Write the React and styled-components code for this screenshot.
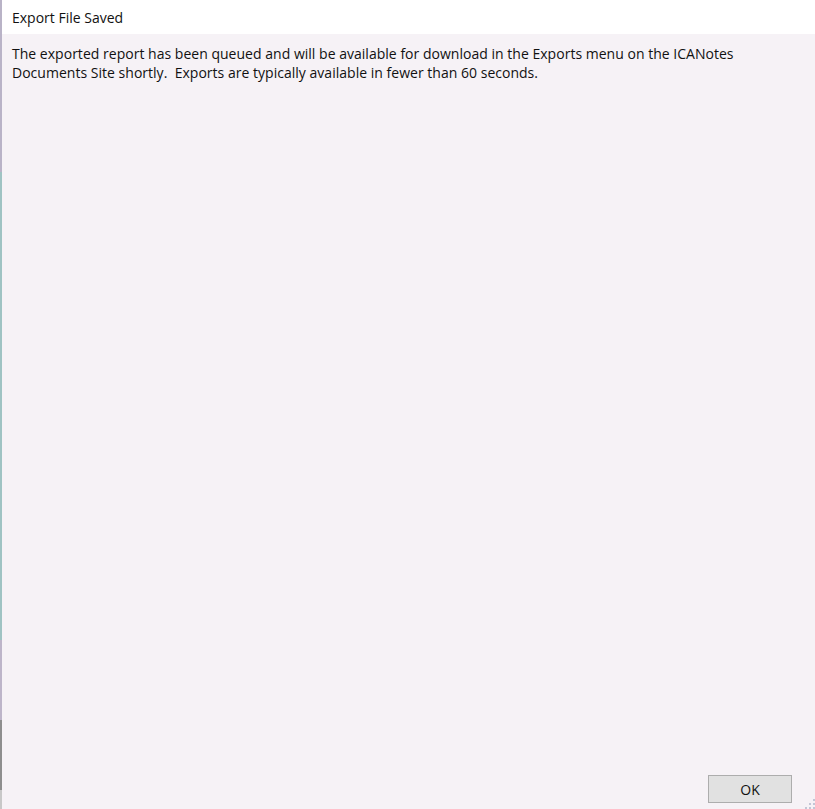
import React from 'react';
import styled, { createGlobalStyle } from 'styled-components';

const Global = createGlobalStyle`
  html, body, #root {
    margin: 0;
    height: 100%;
  }
  body {
    font-family: "Open Sans", "Noto Sans", sans-serif;
    background: #f6f2f6;
  }
`;

const Window = styled.div`
  display: flex;
  height: 809px;
  width: 815px;
  overflow: hidden;
`;

const EdgeStrip = styled.div`
  width: 2px;
  flex-shrink: 0;
  background: linear-gradient(
    to bottom,
    #b9b3c7 0px,
    #b9b3c7 172px,
    #9fc3c3 172px,
    #9fc3c3 640px,
    #bdb5c9 640px,
    #bdb5c9 720px,
    #8e8e8e 720px,
    #8e8e8e 790px,
    #c8c8c8 790px
  );
`;

const Dialog = styled.div`
  position: relative;
  flex: 1;
  display: flex;
  flex-direction: column;
  background: #f6f2f6;
`;

const TitleBar = styled.div`
  height: 34px;
  background: #ffffff;
  display: flex;
  align-items: center;
  padding-left: 10px;
  font-size: 14px;
  color: #111;
`;

const Message = styled.p`
  margin: 0;
  padding: 10px 10px 0;
  font-size: 14px;
  line-height: 19px;
  letter-spacing: 0.02px;
  color: #111;
  white-space: pre-wrap;
`;

const Footer = styled.div`
  margin-top: auto;
  display: flex;
  justify-content: flex-end;
  padding: 0 23px 6px 0;
`;

const Button = styled.button`
  width: 84px;
  height: 28px;
  background: #e1e1e1;
  border: 1px solid #adadad;
  font-family: inherit;
  font-size: 14px;
  color: #111;
  padding: 0;
`;

const SizeGrip = styled.svg`
  position: absolute;
  right: 0;
  bottom: 0;
  width: 12px;
  height: 12px;
`;

const gripDots = [
  [10, 2],
  [10, 6],
  [6, 6],
  [10, 10],
  [6, 10],
  [2, 10],
];

export default function App() {
  return (
    <>
      <Global />
      <Window>
        <EdgeStrip />
        <Dialog>
          <TitleBar>Export File Saved</TitleBar>
          <Message>
            {'The exported report has been queued and will be available for download in the Exports menu on the ICANotes\nDocuments Site shortly.  Exports are typically available in fewer than 60 seconds.'}
          </Message>
          <Footer>
            <Button>OK</Button>
          </Footer>
          <SizeGrip viewBox="0 0 12 12">
            {gripDots.map(([x, y]) => (
              <rect key={`${x}-${y}`} x={x} y={y} width="2" height="2" fill="#c2c6d6" />
            ))}
          </SizeGrip>
        </Dialog>
      </Window>
    </>
  );
}
